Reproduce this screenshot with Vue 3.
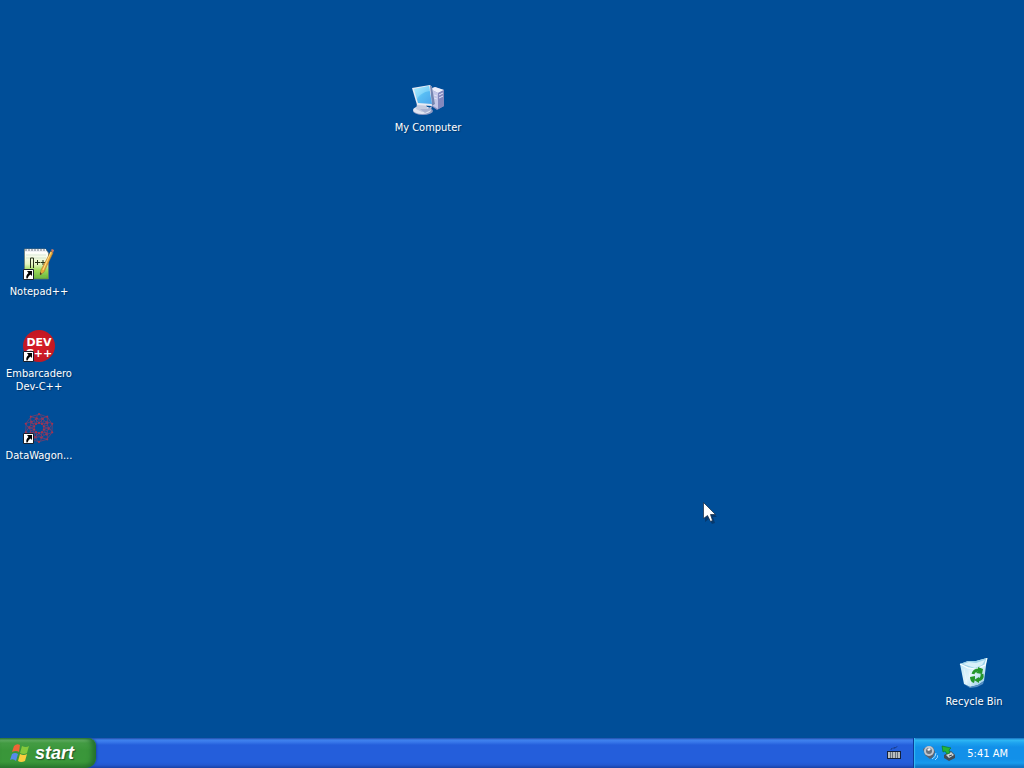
<script setup>
const icons = [
  { id: 'computer', label: 'My Computer', place: { left: '390px', top: '84px' } },
  { id: 'notepad', label: 'Notepad++', shortcut: true, place: { left: '1px', top: '248px' } },
  { id: 'devcpp', label: 'Embarcadero Dev-C++', shortcut: true, place: { left: '1px', top: '330px' } },
  { id: 'wagon', label: 'DataWagon...', shortcut: true, place: { left: '1px', top: '412px' } },
  { id: 'bin', label: 'Recycle Bin', place: { right: '12px', bottom: '30px' } },
]
const spokes = Array.from({ length: 10 }, (_, i) => i * 36)
</script>

<template>
  <div class="screen">
    <main class="desktop">
      <button v-for="icon in icons" :key="icon.id" class="shortcut" :style="icon.place">
        <svg class="picture" viewBox="0 0 32 32" aria-hidden="true">
          <defs>
            <linearGradient id="glass" x1="0" y1="0" x2="1" y2="1">
              <stop offset="0" stop-color="#b4efff" />
              <stop offset="0.5" stop-color="#58bdf4" />
              <stop offset="1" stop-color="#4aa4ea" />
            </linearGradient>
            <linearGradient id="page" x1="0" y1="0" x2="0" y2="1">
              <stop offset="0.1" stop-color="#ffffff" />
              <stop offset="0.5" stop-color="#e6f6c4" />
              <stop offset="0.7" stop-color="#9fdb5a" />
              <stop offset="1" stop-color="#62b52c" />
            </linearGradient>
            <linearGradient id="pail" x1="0" y1="0" x2="1" y2="1">
              <stop offset="0" stop-color="#b4e2f4" />
              <stop offset="0.5" stop-color="#e2f5fc" />
              <stop offset="1" stop-color="#85c3e2" />
            </linearGradient>
            <radialGradient id="ball">
              <stop offset="0" stop-color="#d91c28" />
              <stop offset="1" stop-color="#c01823" />
            </radialGradient>
          </defs>

          <g v-if="icon.id === 'computer'">
            <path d="M18 5l5-2 9 3v16l-7 4-7-5z" fill="#8e93c4" />
            <path d="M18 5l5-2 9 3-6 3z" fill="#eceefb" />
            <path d="M18 5l8 4v16l-8-5z" fill="#c3c7e8" />
            <path d="M26 9l6-3v16l-6 3z" fill="#8388bd" />
            <path d="M22 11l3 1M22 14l3 1M27 11l4-2M27 14l4-2" stroke="#e1e3f7" fill="none" />
            <ellipse cx="11" cy="27" rx="10" ry="4" fill="#8e9ac2" />
            <ellipse cx="10" cy="26" rx="9" ry="4" fill="#e1e5f1" />
            <path d="M5 20l9 1 2 5-6 2-6-3z" fill="#c4cbdf" />
            <path d="M8 25h7l5-3-1 4-6 3z" fill="#a9b3d2" />
            <path d="M0 4l18-3 2 2 3 17-3 2-15-1z" fill="#e7ebf4" />
            <path d="M18 1l2 2 3 17-3 2z" fill="#7585b1" />
            <path d="M2 5l15-3 3 18-14-1z" fill="url(#glass)" />
            <path d="M2 5l15-3 1 5C11 8 7 11 5 15z" fill="#a5e8ff" opacity="0.45" />
          </g>

          <g v-else-if="icon.id === 'notepad'">
            <path d="M1.500 1h21l3 4v26h-24z" fill="url(#page)" stroke="#6b776d" stroke-width="0.700" />
            <path d="M2 1h21v3H2z" fill="#eef0f4" />
            <path d="M3 1v2M6 1v2M9 1v2M12 1v2M15 1v2M18 1v2M21 1v2" stroke="#6f7983" />
            <path d="M3 7h20M3 10h20M3 26h20M3 29h20" stroke="#8fb8a2" opacity="0.3" />
            <path d="M7.500 20V10h3v10" fill="none" stroke="#283018" />
            <path d="M12 14.500h5M14.500 12v5M17.500 14.500h5M20 12v5" stroke="#263218" />
            <path d="M28 3l2 2-9 19-4 3 1-5z" fill="#e9a93a" stroke="#a76a25" stroke-width="0.500" />
            <path d="M28 4l-8 18" stroke="#ffe188" />
            <path d="M28 2l1-1 2 1-1 3z" fill="#cf7a65" />
            <path d="M17 27l0-3 2 2z" fill="#4b3d24" />
          </g>

          <g v-else-if="icon.id === 'devcpp'">
            <circle cx="16" cy="16" r="16" fill="url(#ball)" />
            <text class="ball-text" x="16" y="16">DEV</text>
            <text class="ball-text" x="16" y="27">C++</text>
          </g>

          <g v-else-if="icon.id === 'wagon'" fill="none" stroke="#8b3a63" stroke-width="0.800">
            <circle cx="16" cy="16" r="5" />
            <g v-for="angle in spokes" :key="angle" :transform="`rotate(${angle} 16 16)`">
              <path d="M16 11l4-4-4-5-4 5zM16 2l8 3M16 11V7M12 7h8" opacity="0.8" />
              <circle cx="16" cy="2" r="1" fill="#a8324e" stroke="none" />
              <circle cx="20" cy="7" r="1" fill="#a8324e" stroke="none" />
              <circle cx="16" cy="11" r="1" fill="#b03048" stroke="none" />
            </g>
          </g>

          <g v-else>
            <path d="M2 6l8-3 8 0 11-3-3 23-6 4-8 2-6-3z" fill="url(#pail)" />
            <path d="M2 6l8-3 8 0 11-3-2 7-9 4-8-2z" fill="#9ed3ea" />
            <path d="M5 6l6-2 7 1 9-3-3 5-7 3-6-2z" fill="#d8f1fa" />
            <path d="M2 6l8 4 8 1 9-4 2-7" fill="none" stroke="#f9ffff" stroke-width="1.200" />
            <path d="M6 26l6 3 8-2 6-4-1 3-6 3-7 1z" fill="#578fc4" />
            <path d="M6 11l3 15M11 12l2 16" stroke="#ffffff" opacity="0.4" />
            <g fill="none" stroke="#24962d" stroke-width="3">
              <path d="M15 16q1-4 6-4" />
              <path d="M24 16q1 5-4 6" />
            </g>
            <g fill="#24962d">
              <path d="M20 9l5 2-1 5-6-1 2-2z" />
              <path d="M21 19v6l-5-3z" />
              <path d="M12 19l5-1 0 3-1 4q-4-1-4-6z" />
            </g>
          </g>

          <g v-if="icon.shortcut">
            <path d="M0.500 21.500h10v10h-10z" fill="#ffffff" stroke="#18202c" />
            <path d="M4 23h5v5l-1.500-1.500q-2 1-3 4h-1q-1-3 2-5.500z" fill="#000000" />
          </g>
        </svg>
        <span class="label">{{ icon.label }}</span>
      </button>

      <svg class="pointer" viewBox="0 0 14 22" aria-hidden="true">
        <path d="M2 3v17l4-3 3 5 3-1-2-6h4z" fill="#062b55" opacity="0.6" />
        <path d="M0.500 0.500v16l4-3 3 6 2-1-2-6h5z" fill="#ffffff" stroke="#15283f" stroke-width="0.700" />
      </svg>
    </main>

    <footer class="taskbar">
      <button class="start">
        <svg class="flag" viewBox="0 0 20 20" aria-hidden="true">
          <path d="M4 3q3-3 6-1L9 9q-3-2-7 0z" fill="#ef6536" />
          <path d="M12 3q4 2 7 0l-2 7q-3 2-7 0z" fill="#83c83c" />
          <path d="M2 11q3-2 6 0l-2 7q-3-3-6-1z" fill="#568bea" />
          <path d="M10 11q4 2 7 0l-2 7q-4 2-7 0z" fill="#f9cd3e" />
        </svg>
        <span>start</span>
      </button>
      <div class="tasks">
        <button class="keyboard" aria-label="Keyboard">
          <svg viewBox="0 0 14 14" aria-hidden="true">
            <path d="M4 3.500q0-1 3-1.500t3-1.500" fill="none" stroke="#152d60" stroke-dasharray="2 1" />
            <path d="M0 5h14v8H0z" fill="#13213c" />
            <path d="M1 7h12M1 9h12M1 11h12" stroke="#f2f2ea" stroke-width="1.500" stroke-dasharray="2 0.500" />
          </svg>
        </button>
      </div>
      <div class="tray">
        <svg class="tray-icon" viewBox="0 0 16 16" aria-hidden="true">
          <path d="M1 4l5-3 5 1 2 5-2 5-3 2-5-4z" fill="#59616e" />
          <ellipse cx="7" cy="6" rx="5" ry="5" fill="#bfc5cc" />
          <ellipse cx="7" cy="6" rx="3" ry="3" fill="#67717d" />
          <path d="M5 5l2-2 2 1-2 2z" fill="#f4f5f7" />
          <path d="M10 14q4-2 4-6M13 15q3-2 3-5" fill="none" stroke="#a4dbff" />
        </svg>
        <svg class="tray-icon" viewBox="0 0 16 16" aria-hidden="true">
          <path d="M3 10l7-4 4 4v3l-6 3-5-3z" fill="#414c57" />
          <path d="M5 10l5-3 3 3-5 3z" fill="#cbd3d7" />
          <path d="M8 11l3-1" stroke="#3d4954" />
          <path d="M1 1l9 2-2 2 1 3-3 1-2-3-2 1z" fill="#24b535" stroke="#107a2b" stroke-width="0.700" />
        </svg>
        <time class="clock">5:41 AM</time>
      </div>
    </footer>
  </div>
</template>

<style>
body {
  margin: 0;
}
</style>

<style scoped>
.screen {
  display: flex;
  flex-direction: column;
  height: 100vh;
  overflow: hidden;
  background: #004e98;
  color: #fff;
  font-family: "DejaVu Sans Condensed", "DejaVu Sans", sans-serif;
  font-size: 11px;
}

button {
  padding: 0;
  border: 0;
  background: none;
  color: inherit;
  font: inherit;
}

.desktop {
  position: relative;
  flex: 1;
}

.shortcut {
  position: absolute;
  display: flex;
  flex-direction: column;
  align-items: center;
  gap: 5px;
  width: 76px;
}

.picture {
  width: 32px;
  height: 32px;
}

.label {
  line-height: 13px;
  text-shadow: 1px 1px 1px #00366b;
}

.ball-text {
  fill: #fff;
  font-family: "DejaVu Sans", sans-serif;
  font-size: 11px;
  font-weight: 700;
  text-anchor: middle;
}

.pointer {
  position: absolute;
  left: 703px;
  top: 502px;
  width: 14px;
  height: 22px;
}

.taskbar {
  display: flex;
  height: 30px;
  background: linear-gradient(#1f4da8 0, #3f82ee 2px, #3878ea 4px, #245edb 7px, #245edb 24px, #2358d0 27px, #1941a5 30px);
}

.start {
  display: flex;
  align-items: center;
  gap: 5px;
  width: 96px;
  padding-left: 10px;
  border-radius: 0 8px 10px 0;
  background: linear-gradient(#2d7836 0, #67b367 2px, #449c44 5px, #3a963a 12px, #3a973a 24px, #2c7b2f 30px);
  box-shadow: inset -4px 0 5px #24702d, 1px 0 2px #1a49aa;
  font-family: "Liberation Sans", sans-serif;
  font-size: 18px;
  font-style: italic;
  font-weight: 700;
  text-shadow: 1px 1px 1px #24512a;
}

.flag {
  width: 20px;
  height: 20px;
}

.tasks {
  display: flex;
  flex: 1;
  align-items: center;
  justify-content: flex-end;
  padding-right: 12px;
}

.keyboard,
.keyboard svg {
  display: block;
  width: 14px;
  height: 14px;
}

.tray {
  display: flex;
  align-items: center;
  gap: 3px;
  padding: 0 16px 0 8px;
  border-left: 1px solid #0b3b99;
  background: linear-gradient(#1564b8 0, #30b8f4 2px, #1da2ef 5px, #1290e9 9px, #1290e9 21px, #179bed 25px, #0d69ba 30px);
  box-shadow: inset 1px 0 1px #36bdf4;
}

.tray-icon {
  width: 16px;
  height: 16px;
}

.clock {
  margin-left: 7px;
}
</style>
